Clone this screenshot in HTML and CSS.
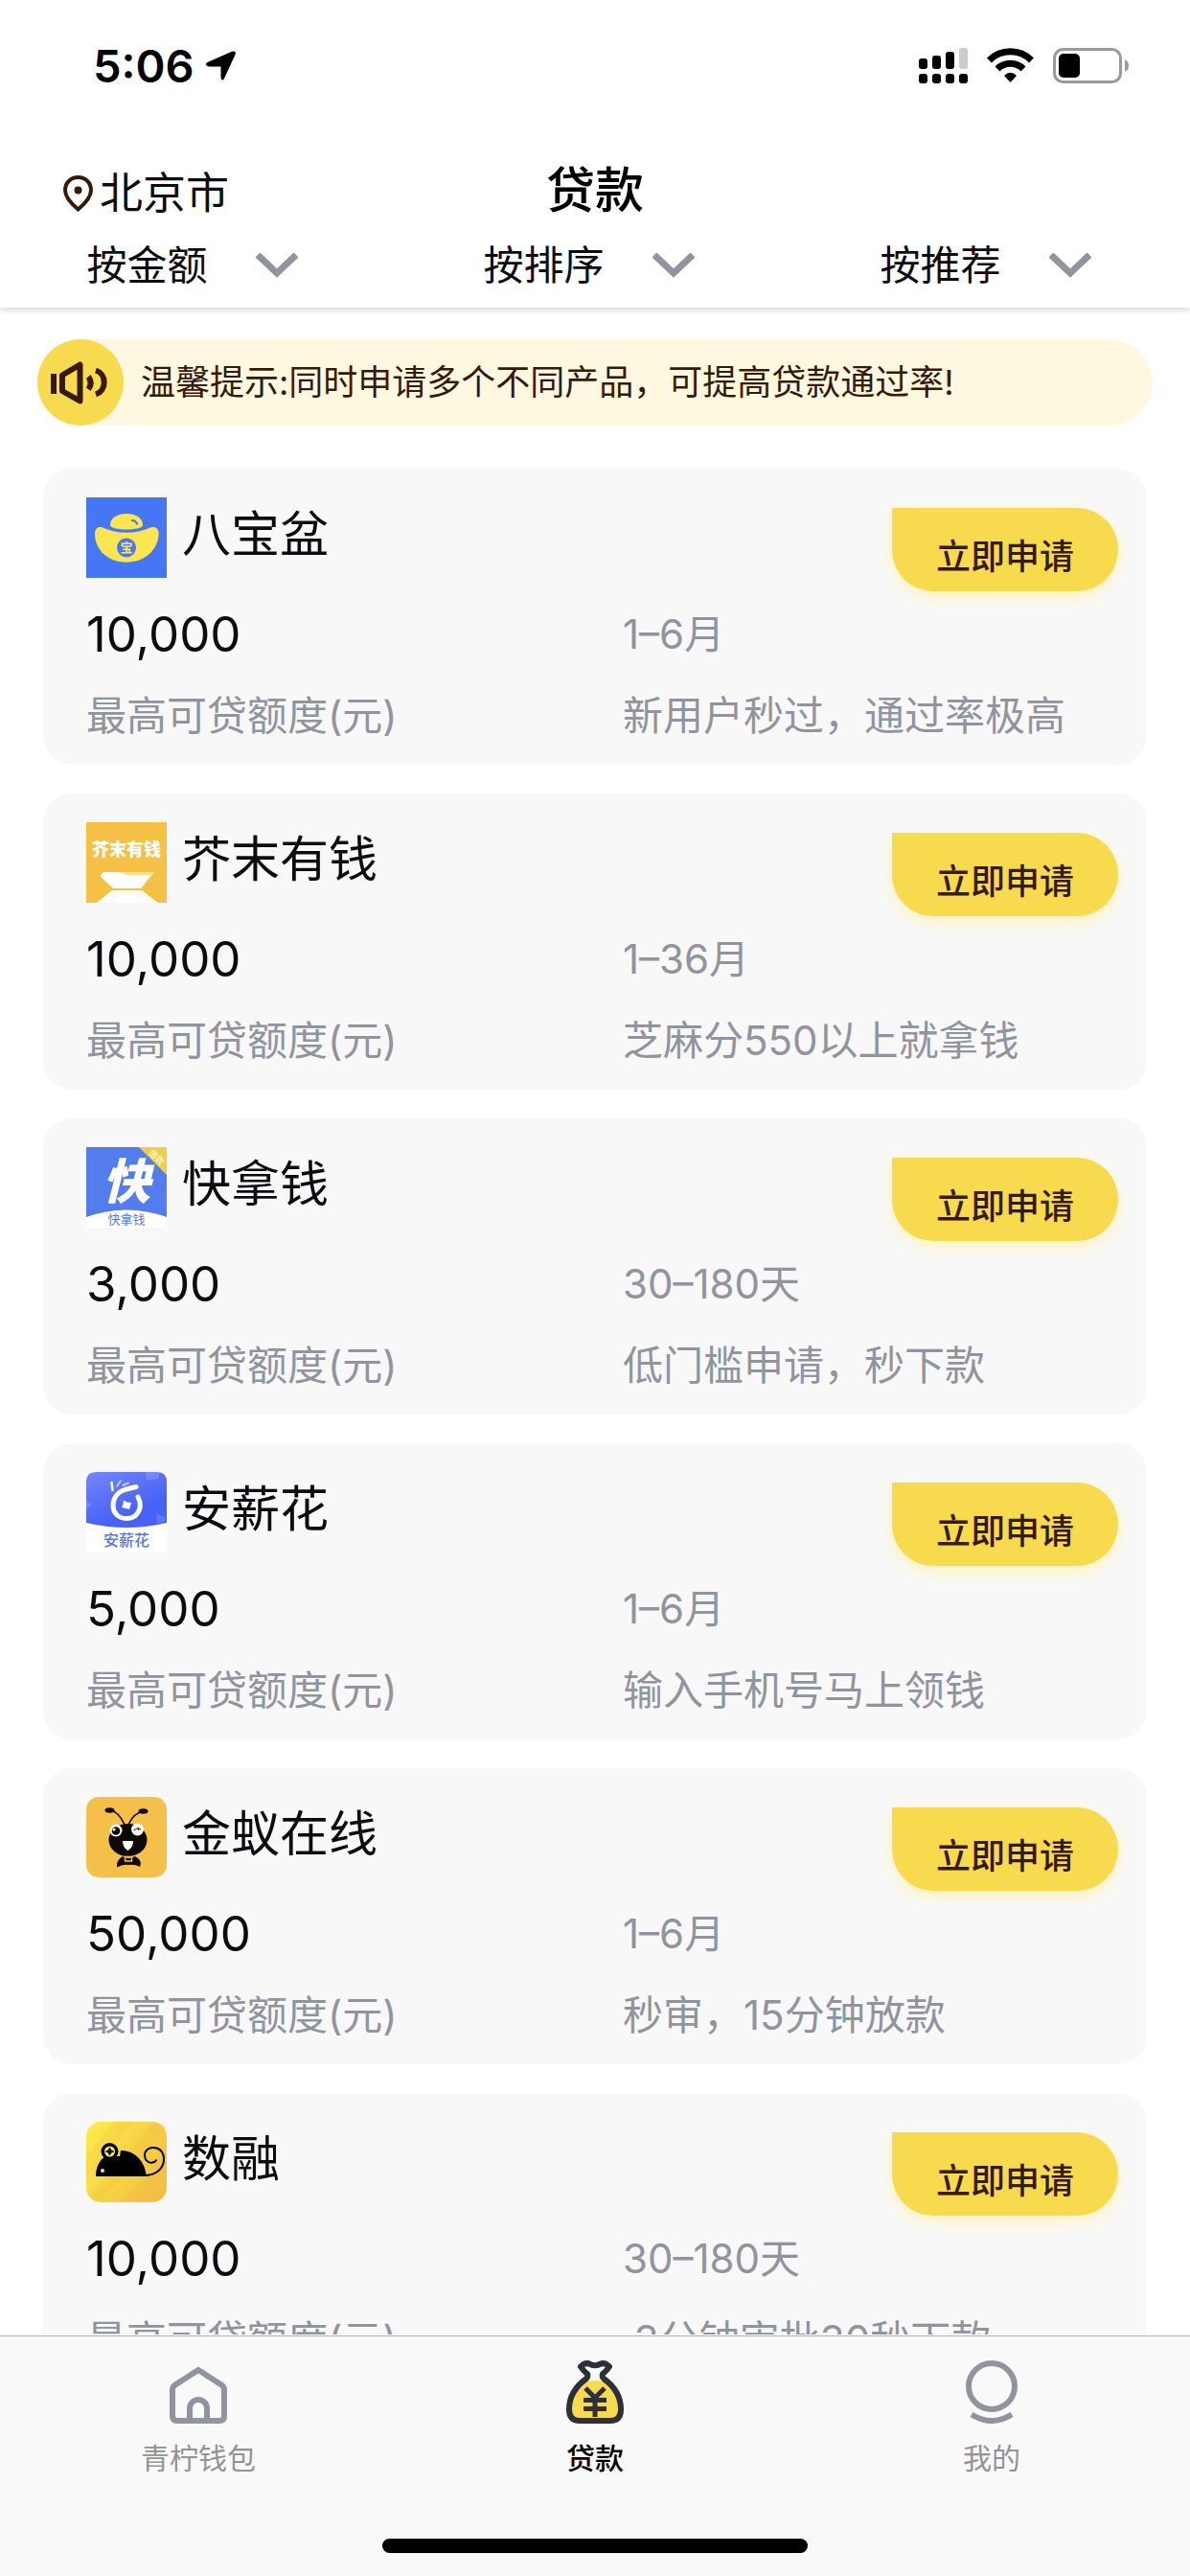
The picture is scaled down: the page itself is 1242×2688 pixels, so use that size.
FILE: index.html
```
<!DOCTYPE html>
<html lang="zh-CN">

<head>
    <meta charset="utf-8">
    <meta name="viewport" content="width=device-width">
    <title>贷款</title>
    <link rel="stylesheet" href="styles.css">
</head>

<body>
    <header class="header">
        <div class="status">
            <span class="time">5:06</span>
            <svg class="arrow" width="32" height="31" viewBox="0 0 32 31"><path d="M2.5 12 L28 .8 Q33 -.5 31.5 4 L20 29 Q17.5 32.5 16.5 28 V16.5 H4 Q-1.5 15 2.5 12Z" /></svg>
            <svg width="51" height="37" viewBox="0 0 51 37">
                <rect x="0" y="11" width="9" height="11" rx="3" />
                <rect x="14" y="8" width="9" height="14" rx="3" />
                <rect x="28" y="4" width="9" height="18" rx="3" />
                <rect x="42" y="0" width="9" height="22" rx="3" fill="#ccc" />
                <rect x="0" y="27" width="9" height="10" rx="3" />
                <rect x="14" y="27" width="9" height="10" rx="3" />
                <rect x="28" y="27" width="9" height="10" rx="3" />
                <rect x="42" y="27" width="9" height="10" rx="3" />
            </svg>
            <svg width="49" height="36" viewBox="0 0 49 36">
                <path d="M2.5 13 A31 31 0 0 1 46.5 13 M11 22 A19 19 0 0 1 38 22" fill="none" stroke="#000" stroke-width="7" />
                <path d="M18 29 Q24.5 22.5 31 29 L24.5 36Z" />
            </svg>
            <svg width="79" height="37" viewBox="0 0 79 37">
                <rect x="1.5" y="1.5" width="69" height="34" rx="9" fill="none" stroke="#999" stroke-width="3" />
                <rect x="6" y="6" width="22" height="25" rx="5" />
                <path d="M75 12 Q79 14 79 18.5 T75 25Z" fill="#999" />
            </svg>
        </div>
        <div class="title-row">
            <button class="city" type="button">
                <svg width="31" height="38" viewBox="0 0 31 38">
                    <path d="M15.5 2 C8 2 2 7.5 2 15.5 C2 23 9 30 15.5 35.5 C22 30 29 23 29 15.5 C29 7.5 23 2 15.5 2Z" fill="none" stroke="#361a06" stroke-width="4" />
                    <circle cx="15.5" cy="15.5" r="4" fill="#361a06" />
                </svg>
                北京市
            </button>
            <h1>贷款</h1>
        </div>
        <div class="filters">
            <label class="filter">
                <select aria-label="按金额"><option>按金额</option></select>
                <svg width="44" height="26" viewBox="0 0 44 26"><path d="M2 2 L22 21 L42 2" /></svg>
            </label>
            <label class="filter">
                <select aria-label="按排序"><option>按排序</option></select>
                <svg width="44" height="26" viewBox="0 0 44 26"><path d="M2 2 L22 21 L42 2" /></svg>
            </label>
            <label class="filter">
                <select aria-label="按推荐"><option>按推荐</option></select>
                <svg width="44" height="26" viewBox="0 0 44 26"><path d="M2 2 L22 21 L42 2" /></svg>
            </label>
        </div>
    </header>

    <main class="content">
        <div class="notice">
            <svg width="90" height="90" viewBox="0 0 90 90">
                <circle cx="45" cy="45" r="45" fill="#f8da4e" />
                <g fill="none" stroke="#361a06" stroke-width="6">
                    <path d="M17 36 V57" />
                    <path d="M26 37.5 L44.5 26.5 V64.5 L26 54Z" stroke-linejoin="round" />
                    <path d="M61 32.5 A12 13 0 0 1 61 57.5" />
                </g>
                <path d="M55.500 37 Q62 45.5 55.5 54 L51 50.5 Q54 45.5 51 41Z" fill="#361a06" />
            </svg>
            <p>温馨提示:同时申请多个不同产品，可提高贷款通过率!</p>
        </div>

        <section class="card">
            <div class="card-top">
                <svg class="logo" viewBox="0 0 84 84">
                    <rect width="84" height="84" fill="#4676f5" />
                    <g fill="#fbe650">
                        <path d="M25 29 C25 21 33 17 42 17 S59 21 59 29 C59 32 50 33.5 42 33.5 S25 32 25 29Z" />
                        <path d="M9 38 C9 32 13 30 17 31.5 C33 38.5 51 38.5 67 31.5 C72 30 75.6 32 75.6 38 C75 55 61 67.7 42 67.7 S9 55 9 38Z" />
                    </g>
                    <path d="M47 24 Q52 24 53.5 28.5" fill="none" stroke="#4676f5" stroke-width="2" />
                    <circle cx="42" cy="52.5" r="10" fill="#4676f5" />
                    <text x="42" y="57" font-size="13" font-weight="700" fill="#fbe650">宝</text>
                </svg>
                <h2>八宝盆</h2>
                <button class="apply" type="button">立即申请</button>
            </div>
            <div class="info">
                <p class="amount">10,000</p>
                <p>1–6月</p>
                <p>最高可贷额度(元)</p>
                <p>新用户秒过，通过率极高</p>
            </div>
        </section>

        <section class="card">
            <div class="card-top">
                <svg class="logo" viewBox="0 0 84 84">
                    <rect width="84" height="84" fill="#f4c145" />
                    <text x="42" y="35" font-size="18" font-weight="900" fill="#fff">芥末有钱</text>
                    <path d="M15 55 L18 52 H71 L57 69 H28 L15 57Z M27 71 H58 L75 84 H11Z" fill="#fff" />
                    <path d="M34 52 H71 L68 55 H43Z" fill="#f9df88" />
                </svg>
                <h2>芥末有钱</h2>
                <button class="apply" type="button">立即申请</button>
            </div>
            <div class="info">
                <p class="amount">10,000</p>
                <p>1–36月</p>
                <p>最高可贷额度(元)</p>
                <p>芝麻分550以上就拿钱</p>
            </div>
        </section>

        <section class="card">
            <div class="card-top">
                <svg class="logo" viewBox="0 0 84 84">
                    <rect width="84" height="84" fill="#537ced" />
                    <path d="M55 0 H84 V29Z" fill="#f0ce46" />
                    <text x="74" y="14" font-size="9" fill="#fff" transform="rotate(45 74 10)">借款</text>
                    <text x="42" y="54" font-size="50" font-weight="900" font-style="italic" fill="#fff">快</text>
                    <path d="M0 73 Q42 58 84 73 V84 H0Z" fill="#fff" />
                    <text x="42" y="80" font-size="13" fill="#537ced">快拿钱</text>
                </svg>
                <h2>快拿钱</h2>
                <button class="apply" type="button">立即申请</button>
            </div>
            <div class="info">
                <p class="amount">3,000</p>
                <p>30–180天</p>
                <p>最高可贷额度(元)</p>
                <p>低门槛申请，秒下款</p>
            </div>
        </section>

        <section class="card">
            <div class="card-top">
                <svg class="logo" viewBox="0 0 84 84">
                    <defs>
                        <linearGradient id="violet" x1="0" y1="0" x2=".6" y2="1">
                            <stop offset="0" stop-color="#7386f8" />
                            <stop offset=".8" stop-color="#4762f6" />
                        </linearGradient>
                    </defs>
                    <rect width="84" height="84" fill="#fff" />
                    <path d="M0 10 Q0 0 10 0 H74 Q84 0 84 10 V53 Q42 63 0 53Z" fill="url(#violet)" />
                    <path d="M62 0 H76 V6 Q69 10 63 8Z M0 29 L6 35 L0 38Z M74 44 L82 47 V52 L73 54Z" fill="#fff" opacity=".15" />
                    <g fill="none" stroke="#fff" stroke-linecap="round">
                        <path d="M54 26 C60 38 53 48.5 42 48.5 C33 48.5 28 42 28 35 C28 27 33 21 40 18.5 L52 15.5" stroke-width="5" />
                        <path d="M26.5 11 L27.5 19" stroke-width="2.5" />
                        <path d="M32 15 L36 9 M38 14 L44 11.5" stroke-width="2" opacity=".6" />
                    </g>
                    <path d="M39 29.5 Q42 32 47 32 L45 39 Q41 38 37 37 Q39 34 39 29.5Z" fill="#fff" />
                    <text x="42" y="77" font-size="16" font-weight="500" fill="#5b74ee">安薪花</text>
                </svg>
                <h2>安薪花</h2>
                <button class="apply" type="button">立即申请</button>
            </div>
            <div class="info">
                <p class="amount">5,000</p>
                <p>1–6月</p>
                <p>最高可贷额度(元)</p>
                <p>输入手机号马上领钱</p>
            </div>
        </section>

        <section class="card">
            <div class="card-top">
                <svg class="logo" viewBox="0 0 84 84">
                    <rect width="84" height="84" fill="#fff" />
                    <rect width="84" height="84" rx="13" fill="#f4c04a" />
                    <path d="M40 29 C36 20 31 15 25 14 M44 29 C48 20 53 16 60 15" fill="none" stroke="#0d0802" stroke-width="1.5" />
                    <g fill="#0d0802">
                        <ellipse cx="24.5" cy="14" rx="5" ry="2.8" />
                        <ellipse cx="59.5" cy="15" rx="5" ry="2.8" />
                        <ellipse cx="43.5" cy="45" rx="20" ry="17" />
                        <path d="M38 62 Q31 66 32 73.5 Q38 70 44 71 Q51 70 56 73 Q59 66 51 62 Q44 66 38 62Z" />
                    </g>
                    <circle cx="31" cy="35" r="6.5" fill="#fff" />
                    <circle cx="31" cy="35.5" r="4.3" fill="#0d0802" />
                    <circle cx="29" cy="34" r="1.5" fill="#fff" />
                    <circle cx="53.5" cy="34" r="6.5" fill="#fff" />
                    <path d="M49.5 35 L54 32.5 L57 34 M54 33 L55 35" fill="none" stroke="#0d0802" />
                    <path d="M38 46 H49 Q49 53 43.5 56 Q38 53 38 46Z" fill="#fff" />
                    <path d="M40.5 62.5 V67 H47.5 V62.5Z" fill="none" stroke="#f4c04a" stroke-width="1.5" />
                </svg>
                <h2>金蚁在线</h2>
                <button class="apply" type="button">立即申请</button>
            </div>
            <div class="info">
                <p class="amount">50,000</p>
                <p>1–6月</p>
                <p>最高可贷额度(元)</p>
                <p>秒审，15分钟放款</p>
            </div>
        </section>

        <section class="card">
            <div class="card-top">
                <svg class="logo" viewBox="0 0 84 84">
                    <defs>
                        <linearGradient id="gold" x1="0" y1=".2" x2="1" y2=".8">
                            <stop offset="0" stop-color="#fce94a" />
                            <stop offset="1" stop-color="#f2bd44" />
                        </linearGradient>
                    </defs>
                    <rect width="84" height="84" rx="15" fill="url(#gold)" />
                    <path d="M30 0 H50 L0 58 V36Z M70 0 L84 5 L14 84 L2 78Z M84 30 V52 L56 84 H36Z" fill="#f2b93e" opacity=".2" />
                    <path d="M10 57 C10 47 14 40 20 36 L35 36 L36 30 C50 30 61 40 63 57Z" />
                    <circle cx="24.5" cy="31" r="9" />
                    <circle cx="24.5" cy="31" r="5.5" fill="#fce94a" />
                    <path d="M24.5 27 Q25 30.5 28.5 31 Q25 31.5 24.5 35 Q24 31.5 20.5 31 Q24 30.5 24.5 27Z" stroke="#000" />
                    <circle cx="17" cy="51" r="2" fill="#fce94a" />
                    <path d="M60 56 C73 56 81 49 81 39 C81 31 76 27 70 27 C64 27 60.5 31 61 36 C61.5 41 66 43.5 69 42.5 C72 42 73 41 73 39.5" fill="none" stroke="#000" stroke-width="2" />
                </svg>
                <h2>数融</h2>
                <button class="apply" type="button">立即申请</button>
            </div>
            <div class="info">
                <p class="amount">10,000</p>
                <p>30–180天</p>
                <p>最高可贷额度(元)</p>
                <p>&nbsp;3分钟审批30秒下款</p>
            </div>
        </section>
    </main>

    <nav class="tabbar">
        <div class="tabs">
            <a href="#wallet">
                <svg width="66" height="66" viewBox="0 0 66 66">
                    <path d="M33 10 L57 25.5 Q60 27.5 60 31 V58 Q60 63 55 63 H11 Q6 63 6 58 V31 Q6 27.5 9 25.5Z M24 63 V50 a9 9 0 0 1 18 0 V63" fill="none" stroke="#8f949f" stroke-width="6" />
                </svg>
                青柠钱包
            </a>
            <a href="#loan" class="active">
                <svg width="66" height="66" viewBox="0 0 66 66">
                    <path d="M20 23 Q33 19 46 23 C54 30 58 40 58 51 Q58 62 49 62 H17 Q8 62 8 51 C8 40 12 30 20 23Z" fill="#f8da4e" />
                    <path d="M18 6.5 Q23 1.5 28 4 Q33 6.5 38 4 Q43 1.5 48 6.5 Q44 12 41 14 Q40 17 42 19 C53 27 60 38 60 51 Q60 63 49 63 H17 Q6 63 6 51 C6 38 13 27 24 19 Q26 17 25 14 Q22 12 18 6.5Z" fill="none" stroke="#2d3038" stroke-width="6" stroke-linejoin="round" />
                    <!-- yen sign on the bag -->
                    <path d="M23 29 L33 39 L43 29 M33 38 V59 M21 41.5 H45 M21 50.5 H45" fill="none" stroke="#2d3038" stroke-width="5" />
                </svg>
                贷款
            </a>
            <a href="#mine">
                <svg width="66" height="66" viewBox="0 0 66 66">
                    <g fill="none" stroke="#8f949f" stroke-width="6">
                        <circle cx="33" cy="27" r="24" />
                        <path d="M12 56.5 Q33 69.5 54 56.5" />
                    </g>
                </svg>
                我的
            </a>
        </div>
        <div class="home-bar"></div>
    </nav>
</body>

</html>
```
FILE: styles.css
```
* {
    box-sizing: border-box;
    margin: 0;
    padding: 0;
}

body {
    display: flex;
    flex-direction: column;
    height: 100vh;
    background-color: #fff;
    color: #0b0c10;
    font-family: Inter, "Noto Sans CJK SC", sans-serif;
    font-size: 42px;
}

button, select {
    border: 0;
    background: none;
    color: inherit;
    font: inherit;
    cursor: pointer;
}

svg {
    display: block;
    flex: none;
}

svg text {
    text-anchor: middle;
}

/* header */
.header {
    position: relative;
    z-index: 1;
    padding-bottom: 23px;
    background-color: #fff;
    box-shadow: 0 3px 6px rgba(0,0,0,0.14);
}

.status {
    display: flex;
    align-items: center;
    gap: 20px;
    height: 136px;
    padding: 0 64px 0 97px;
}

.time {
    font-size: 47px;
    font-weight: 600;
    color: #000;
}

.arrow {
    margin-left: -9px;
    margin-right: auto;
}

.title-row {
    display: grid;
    grid-template-columns: 1fr auto 1fr;
    align-items: center;
    height: 122px;
    padding: 4px 66px 0;
}

.city {
    display: flex;
    align-items: center;
    gap: 7px;
    padding-top: 6px;
    font-size: 45px;
    line-height: 48px;
}

h1 {
    font-size: 51px;
    font-weight: 500;
    line-height: 60px;
    color: #000;
}

.filters {
    display: grid;
    grid-template-columns: repeat(3, 1fr);
}

.filter {
    display: flex;
    align-items: center;
    justify-content: center;
    gap: 49px;
    height: 40px;
    padding-right: 13px;
    padding-bottom: 2px;
}

.filter select {
    appearance: none;
    line-height: 60px;
}

.filter path {
    fill: none;
    stroke: #8f949f;
    stroke-width: 7;
}

/* scrolling list */
.content {
    flex: 1;
    min-height: 0;
    overflow: hidden;
    padding: 33px 39px 0;
}

.notice {
    display: flex;
    align-items: center;
    gap: 18px;
    margin-bottom: 45px;
    border-radius: 45px;
    background-color: #fef8e1;
    color: #361a06;
    font-size: 36px;
    line-height: 40px;
}

.card {
    margin: 0 6px 30px;
    padding: 30px 30px 21px 45px;
    border-radius: 30px;
    background-color: #f8f8f8;
}

.card-top {
    display: flex;
    align-items: flex-start;
    gap: 16px;
    margin-bottom: 29px;
}

.logo {
    width: 84px;
    height: 84px;
}

h2 {
    flex: 1;
    font-size: 51px;
    font-weight: 400;
    line-height: 78px;
}

.apply {
    width: 236px;
    height: 87px;
    margin-top: 11px;
    margin-bottom: -14px;
    padding-top: 8px;
    border-radius: 0 43px 43px 43px;
    background-color: #f8da4e;
    box-shadow: 0 6px 15px #fef3bd;
    color: #361a06;
    font-size: 36px;
    font-weight: 500;
}

.info {
    display: grid;
    grid-template-columns: 52% 1fr;
    row-gap: 25px;
    color: #8f949f;
    line-height: 60px;
    white-space: nowrap;
}

.info .amount {
    color: #0b0c10;
    font-size: 51px;
}

/* bottom tabs */
.tabbar {
    margin-top: 1px;
    padding: 25px 0 24px;
    border-top: 1px solid #b2b2b2;
    background-color: #f9f9f9;
}

.tabs {
    display: grid;
    grid-template-columns: repeat(3, 1fr);
}

.tabs a {
    display: flex;
    flex-direction: column;
    align-items: center;
    gap: 21px;
    color: #939393;
    font-size: 30px;
    line-height: 30px;
    text-decoration: none;
}

.tabs .active {
    color: #000;
    font-weight: 500;
}

.home-bar {
    width: 444px;
    height: 15px;
    margin: 69px auto 0;
    border-radius: 8px;
    background-color: #000;
}
```
